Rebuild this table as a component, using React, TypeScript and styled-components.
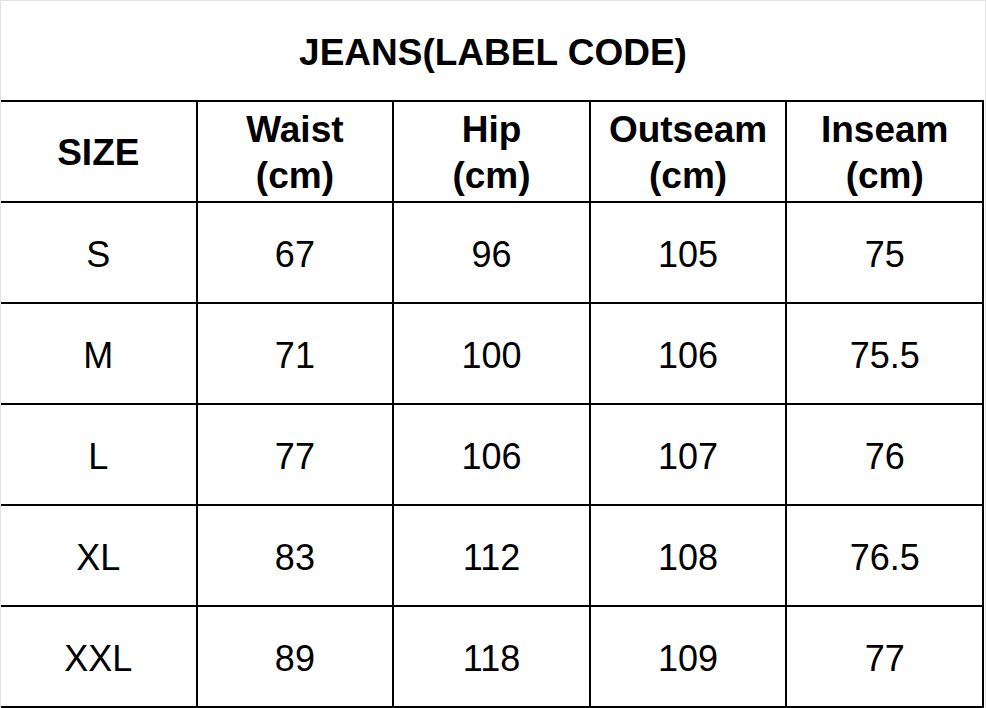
import React from 'react';
import styled, { createGlobalStyle } from 'styled-components';

interface SizeRow {
  size: string;
  waist: string;
  hip: string;
  outseam: string;
  inseam: string;
}

const headers = [
  ['SIZE'],
  ['Waist', '(cm)'],
  ['Hip', '(cm)'],
  ['Outseam', '(cm)'],
  ['Inseam', '(cm)'],
];

const rows: SizeRow[] = [
  { size: 'S', waist: '67', hip: '96', outseam: '105', inseam: '75' },
  { size: 'M', waist: '71', hip: '100', outseam: '106', inseam: '75.5' },
  { size: 'L', waist: '77', hip: '106', outseam: '107', inseam: '76' },
  { size: 'XL', waist: '83', hip: '112', outseam: '108', inseam: '76.5' },
  { size: 'XXL', waist: '89', hip: '118', outseam: '109', inseam: '77' },
];

function App() {
  return (
    <>
      <GlobalStyle />
      <Sheet>
        <Title>JEANS(LABEL CODE)</Title>
        <Grid>
          {headers.map((lines) => (
            <HeadCell key={lines[0]}>
              {lines.map((l) => <span key={l}>{l}</span>)}
            </HeadCell>
          ))}
          {rows.map((r) => (
            <React.Fragment key={r.size}>
              <Cell>{r.size}</Cell>
              <Cell>{r.waist}</Cell>
              <Cell>{r.hip}</Cell>
              <Cell>{r.outseam}</Cell>
              <Cell>{r.inseam}</Cell>
            </React.Fragment>
          ))}
        </Grid>
      </Sheet>
    </>
  );
}

export default App;

const GlobalStyle = createGlobalStyle`
  html, body { margin: 0; padding: 0; background: #fff; }
  body { font-family: "Liberation Sans", Arial, sans-serif; color: #000; }
`

const Sheet = styled.div`
  width: 986px;
  height: 708px;
  box-sizing: border-box;
  border: 1px solid #e2e2e2;
  border-bottom: none;
  display: flex;
  flex-direction: column;
  overflow: hidden;
`

const Title = styled.h1`
  margin: 0;
  height: 99px;
  display: flex;
  align-items: center;
  justify-content: center;
  font-size: 37px;
  font-weight: bold;
  padding-top: 4px;
  box-sizing: border-box;
`

const Grid = styled.div`
  width: 983px;
  display: grid;
  grid-template-columns: repeat(5, 1fr);
  grid-template-rows: repeat(6, 101px);
  border-top: 2px solid #000;
`

const Cell = styled.div`
  box-sizing: border-box;
  border-right: 2px solid #000;
  border-bottom: 2px solid #000;
  display: flex;
  align-items: center;
  justify-content: center;
  font-size: 36px;
  padding-top: 4px;
`

const HeadCell = styled(Cell)`
  flex-direction: column;
  font-weight: bold;
  font-size: 37px;
  line-height: 46px;
  padding-top: 2px;
`
